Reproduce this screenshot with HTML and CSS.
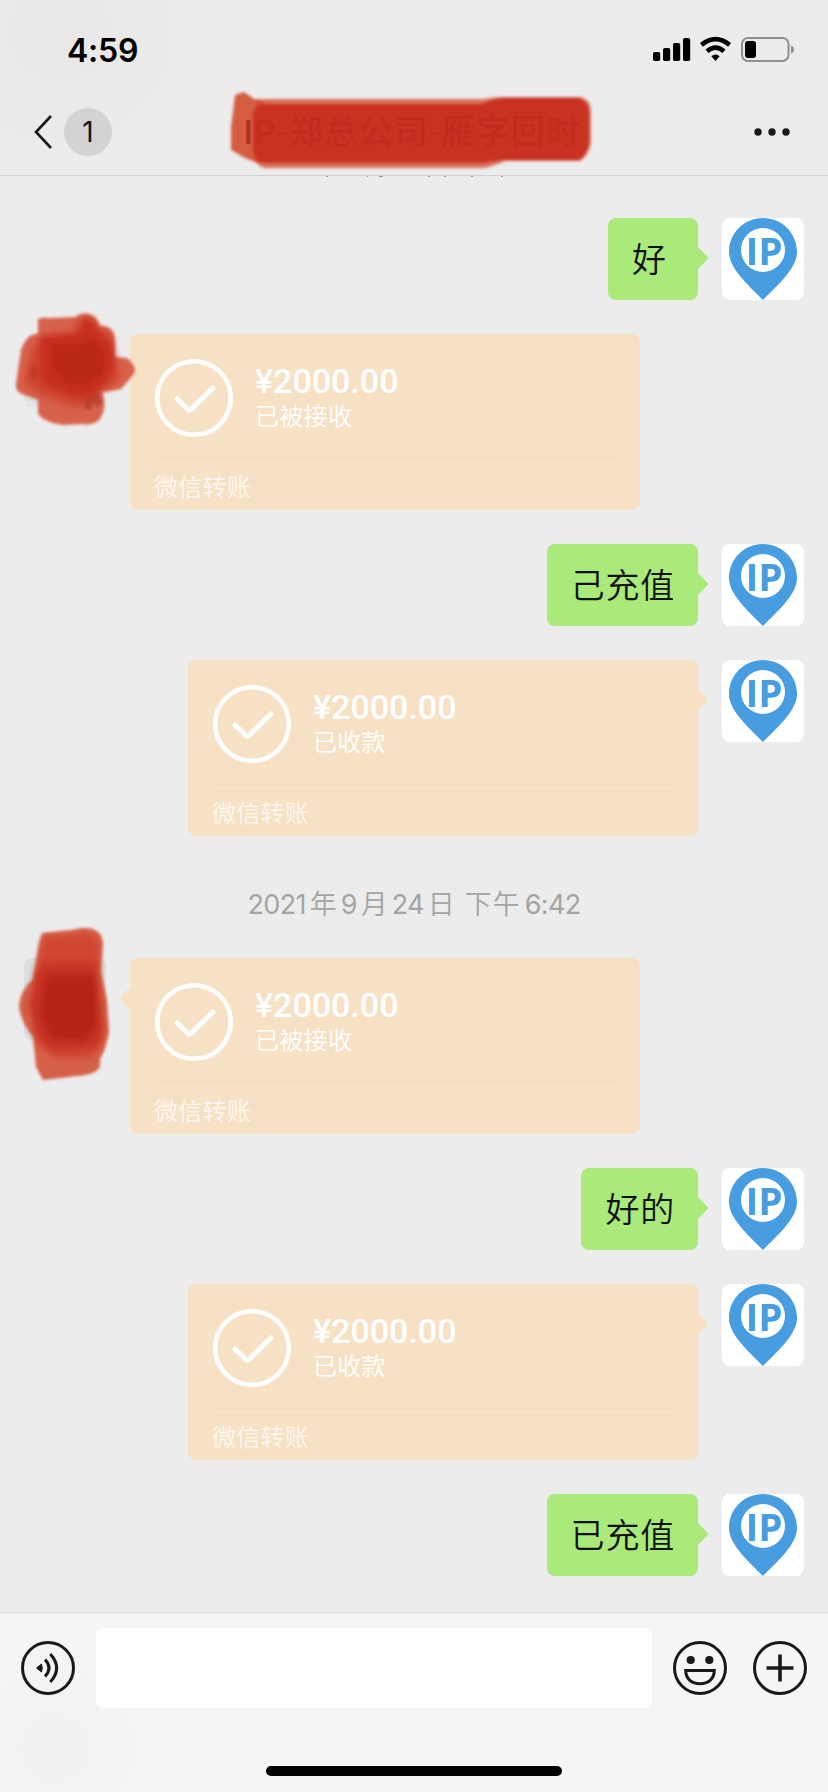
FILE: index.html
```html
<!DOCTYPE html>
<html lang="zh-CN">
<head>
<meta charset="utf-8">
<title>聊天</title>
<link rel="stylesheet" href="styles.css">
</head>
<body>
<svg class="defs" width="0" height="0">
  <defs>
    <filter id="soft" x="-10%" y="-10%" width="120%" height="120%"><feGaussianBlur stdDeviation="1.4"/></filter>
    <filter id="softer" x="-20%" y="-20%" width="140%" height="140%"><feGaussianBlur stdDeviation="3"/></filter>
    <symbol id="pin" viewBox="0 0 82 82">
      <path d="M41 0C22 0 7 15 7 34C7 50 25 66 41 82C57 66 75 50 75 34C75 15 60 0 41 0Z" fill="#489ce0"/>
      <circle cx="41" cy="32" r="22" fill="#fdfffd"/>
      <text x="23.500" y="46.5" class="pin-text" textLength="37" lengthAdjust="spacingAndGlyphs">IP</text>
    </symbol>
    <symbol id="check" viewBox="0 0 80 80">
      <circle cx="40" cy="40" r="36.8" fill="none" stroke="#fff" stroke-width="4.6"/>
      <path d="M21.500 39.500L34 51.500Q35.500 53 37 51.500L60.500 28.500" fill="none" stroke="#fff" stroke-width="4.8"/>
    </symbol>
  </defs>
</svg>
<div class="screen">
  <header class="header">
    <div class="status">
      <span class="clock">4:59</span>
      <svg class="status-icons" width="144" height="28" viewBox="0 0 144 28">
        <rect x="1" y="16" width="7.200" height="9" rx="1.800"/>
        <rect x="11" y="12" width="7.200" height="13" rx="1.800"/>
        <rect x="21" y="7" width="7.200" height="18" rx="1.800"/>
        <rect x="31" y="2" width="7.200" height="23" rx="1.800"/>
        <g fill="none" stroke="#000" stroke-width="4.600">
          <path d="M49.400 8.900Q63.500 -2.500 77.600 8.900"/>
          <path d="M55 15.200Q63.500 8 72 15.200"/>
        </g>
        <path d="M59.300 20.200Q63.500 16.800 67.700 20.200L63.500 25Z"/>
        <rect x="90" y="2" width="46.500" height="23" rx="6" fill="none" stroke="#8f8f8f" stroke-width="2"/>
        <rect x="93" y="5" width="11" height="17" rx="3"/>
        <path d="M139 9.500Q142 10.500 142 13.500T139 17.500Z" fill="#8f8f8f"/>
      </svg>
    </div>
    <div class="nav">
      <div class="back">
        <svg width="20" height="36" viewBox="0 0 20 36"><path d="M17 2L2 18L17 34" fill="none" stroke="#191919" stroke-width="2.600"/></svg>
        <span class="count">1</span>
      </div>
      <div class="title"><i>I</i>P-郑总公司-雁字回时</div>
      <svg class="more" width="36" height="8" viewBox="0 0 36 8"><circle cx="4" cy="4" r="3.700"/><circle cx="18" cy="4" r="3.700"/><circle cx="32" cy="4" r="3.700"/></svg>
    </div>
    <svg class="scribble title-mark" width="370" height="90" viewBox="0 0 370 90">
      <g filter="url(#soft)">
        <path d="M10 8L19 5L29 12L40 16V76L30 75L20 71L6 63L6 40Z" fill="#d04a2b" opacity=".88"/>
        <path d="M31 12H258Q270 10 278 10H356Q365 13 366 22V56Q364 69 355 74H280Q264 81 258 81H40Q32 79 29 72Z" fill="#d4452a" opacity=".75"/>
        <path d="M36 17H257Q270 11 280 11H354Q364 16 364 25V56Q361 68 354 73H278Q268 74 258 76H39Q30 76 28 64V24Z" fill="#c93120"/>
      </g>
    </svg>
  </header>

  <main class="chat">
    <svg class="clipped" width="200" height="2" viewBox="0 0 200 2" fill="#999"><path d="M16 0h2v1h-2zM57 0h1v1h-1zM69 0h4v1h-4zM118 0h2v1h-2zM134 0h2v1h-2zM161 0h2v1h-2zM191 0h2v1h-2z"/></svg>
    <div class="row me">
      <div class="bubble">好</div>
      <div class="avatar"><svg width="82" height="82"><use href="#pin"/></svg></div>
    </div>
    <div class="row peer">
      <div class="photo photo-a">
        <svg class="scribble" width="126" height="120" viewBox="0 0 126 120">
          <path d="M12 76Q12 60 26 58L70 62L92 78Q92 90 86 93H15Q11 86 12 76Z" fill="#dfe4e6"/>
          <g filter="url(#soft)">
            <path d="M26 5Q30 3 38 4L64 3Q68 -1 76 0Q84 1 88 12Q102 11 103 26L103 43L115 44Q123 50 123 58L117 66L109 75L99 77L90 78Q96 92 88 105Q82 112 70 110L50 111Q32 108 26 100V86L12 81Q3 78 4 70L9 36Q15 19 26 20Z" fill="#d34a30" opacity=".85"/>
            <path d="M72 84L80 80L86 78L90 88L86 94L81 88L79 96L73 95Z" fill="#93331f" opacity=".5"/>
            <path d="M17 58L23 47L27 61L21 66Z" fill="#97301f" opacity=".5"/>
          </g>
          <g filter="url(#softer)">
            <path d="M27 24L61 21L65 6Q74 -2 84 8L88 14Q101 17 101 30L103 45L109 63L96 74L88 78L80 90L64 94L26 80L12 68L20 34Z" fill="#cb301f" opacity=".6"/>
            <path d="M28 22L66 18L76 2L90 22L101 30L104 50L96 66L84 80L66 84L30 70Z" fill="#c52a1b" opacity=".9"/>
            <path d="M40 30H68L82 24L94 42L90 60L72 72L52 66L40 52Z" fill="#b32218" opacity=".6"/>
          </g>
        </svg>
      </div>
      <div class="card">
        <div class="pay"><svg width="80" height="80"><use href="#check"/></svg><div><div class="amount">¥2000.00</div><div class="state">已被接收</div></div></div>
        <div class="source">微信转账</div>
      </div>
    </div>
    <div class="row me">
      <div class="bubble">己充值</div>
      <div class="avatar"><svg width="82" height="82"><use href="#pin"/></svg></div>
    </div>
    <div class="row me">
      <div class="card">
        <div class="pay"><svg width="80" height="80"><use href="#check"/></svg><div><div class="amount">¥2000.00</div><div class="state">已收款</div></div></div>
        <div class="source">微信转账</div>
      </div>
      <div class="avatar"><svg width="82" height="82"><use href="#pin"/></svg></div>
    </div>
    <div class="date"><b>2021</b>年<b>9</b>月<b>24</b>日<span class="part">下午</span><b>6:42</b></div>
    <div class="row peer">
      <div class="photo photo-b">
        <svg class="scribble" width="100" height="160" viewBox="0 0 100 160">
          <g filter="url(#soft)">
            <path d="M31 4L61 1Q82 -5 90 6L92 14L90 42L96 72L98 104L93 122L89 130L89 138Q84 146 66 147L32 151L25 138L22 108Q9 92 8 76Q9 62 22 50L28 14Z" fill="#d34a2c" opacity=".86"/>
          </g>
          <g filter="url(#softer)">
            <path d="M33 8L80 4L88 14V50L93 100Q93 115 86 124L78 130L45 130L27 117L22 98L22 50Z" fill="#cb301e" opacity=".55"/>
            <path d="M26 44L34 35L86 34L92 100L86 118L46 122L26 110L18 76Z" fill="#c42a1b" opacity=".8"/>
            <path d="M34 50L44 46L84 46L86 96L74 112L40 110L30 86Z" fill="#af2117" opacity=".75"/>
          </g>
        </svg>
      </div>
      <div class="card tail">
        <div class="pay"><svg width="80" height="80"><use href="#check"/></svg><div><div class="amount">¥2000.00</div><div class="state">已被接收</div></div></div>
        <div class="source">微信转账</div>
      </div>
    </div>
    <div class="row me">
      <div class="bubble">好的</div>
      <div class="avatar"><svg width="82" height="82"><use href="#pin"/></svg></div>
    </div>
    <div class="row me">
      <div class="card">
        <div class="pay"><svg width="80" height="80"><use href="#check"/></svg><div><div class="amount">¥2000.00</div><div class="state">已收款</div></div></div>
        <div class="source">微信转账</div>
      </div>
      <div class="avatar"><svg width="82" height="82"><use href="#pin"/></svg></div>
    </div>
    <div class="row me">
      <div class="bubble">已充值</div>
      <div class="avatar"><svg width="82" height="82"><use href="#pin"/></svg></div>
    </div>
  </main>

  <footer class="footer">
    <div class="composer">
      <svg class="tool" width="56" height="56" viewBox="0 0 56 56">
        <circle cx="28" cy="28" r="25.500"/>
        <path d="M16.500 28L21.500 24Q23 28 21.500 32Z" fill="#191919" stroke-width="1"/>
        <path d="M25 19.500Q33 28 25 36.500M30.300 14Q43 28 30.300 42"/>
      </svg>
      <div class="field"></div>
      <svg class="tool smile" width="56" height="56" viewBox="0 0 56 56">
        <circle cx="28" cy="28" r="25.500"/>
        <circle cx="18.700" cy="20" r="4.100" class="solid"/><circle cx="37.300" cy="20" r="4.100" class="solid"/>
        <path d="M13.700 30.500H42.300C42.300 39 36 43.700 28 43.700S13.700 39 13.700 30.500Z"/>
      </svg>
      <svg class="tool" width="56" height="56" viewBox="0 0 56 56"><circle cx="28" cy="28" r="25.500"/><path d="M14.500 28H41.500M28 14.500V41.500" stroke-width="3.600"/></svg>
    </div>
    <div class="home"></div>
  </footer>
</div>
</body>
</html>
```
FILE: styles.css
```css
* { box-sizing: border-box; }
body { margin: 0; background: #ececec; font-family: Inter, "Noto Sans CJK SC", sans-serif; }
svg { display: block; flex: none; }
.defs { position: absolute; }
.screen { width: 828px; height: 1792px; display: flex; flex-direction: column; overflow: hidden; background: #ececec; }

.header { position: relative; height: 176px; flex: none; border-bottom: 1px solid #d0d0d0; background: radial-gradient(circle at 60px 30px, #e9e7e6 0, #ececec 130px); }
.status { height: 88px; display: flex; justify-content: space-between; padding: 36px 32px 0 67px; }
.clock { font-size: 32px; font-weight: 600; line-height: 29px; letter-spacing: -.2px; color: #000; }
.nav { height: 88px; display: flex; align-items: center; justify-content: space-between; padding: 0 38px 0 34px; }
.back { display: flex; align-items: center; gap: 10px; width: 110px; }
.count { width: 48px; height: 48px; border-radius: 50%; background: #d3d3d3; font-size: 28px; line-height: 49px; text-align: center; color: #191919; }
.title { position: relative; z-index: 2; font-family: Roboto, "Noto Sans CJK SC", sans-serif; font-size: 34px; line-height: 50px; letter-spacing: .9px; white-space: nowrap; font-weight: 500; color: #c02c1e; }
.title i { font-style: normal; color: #ae3320; }
.more { margin-left: 74px; fill: #191919; }
.scribble { position: absolute; overflow: visible; }
.title-mark { left: 225px; top: 87px; z-index: 1; }

.chat { flex: none; height: 1436px; display: flex; flex-direction: column; gap: 34px; padding-top: 42px; position: relative; }
.clipped { position: absolute; left: 310px; top: 0; }
.row { display: flex; align-items: flex-start; gap: 24px; padding: 0 24px; }
.me { justify-content: flex-end; }
.bubble, .card { position: relative; border-radius: 8px; }
.bubble { min-width: 90px; height: 82px; padding: 0 23px 0 24px; background: #a9ea7a; color: #111; font-family: "Noto Sans CJK SC", sans-serif; font-size: 34px; line-height: 80px; letter-spacing: .8px; font-weight: 350; }
.bubble::after, .me .card::after, .tail::after { content: ""; position: absolute; top: 28px; right: -10px; width: 11px; height: 24px; background: inherit; clip-path: polygon(0 0, 90% 42%, 100% 50%, 90% 58%, 0 100%); }
.tail::after { right: auto; left: -10px; transform: scaleX(-1); }
.avatar { width: 82px; height: 82px; border-radius: 8px; background: #fff; overflow: hidden; }
.pin-text { font-family: "Open Sans", sans-serif; font-size: 38px; font-weight: 700; fill: #489ce0; }
.photo { position: relative; width: 82px; height: 82px; border-radius: 8px; z-index: 1; }
.photo-a .scribble { left: -12px; top: -20px; }
.photo-b { background: #dadfe2; }
.photo-b .scribble { left: -13px; top: -29px; }

.card { width: 510px; height: 176px; padding: 24px; background: #f7e1c5; color: #fff; }
.pay { height: 105px; display: flex; align-items: flex-start; gap: 21px; border-bottom: 1px solid #f8e7d2; }
.amount { margin-top: 4px; height: 38px; line-height: 38px; font-family: Roboto, sans-serif; font-size: 34px; font-weight: 500; }
.state, .source { font-family: "Noto Sans CJK SC", sans-serif; font-size: 24px; letter-spacing: .3px; font-weight: 350; }
.state { line-height: 30px; }
.source { line-height: 46px; color: rgba(255, 255, 255, .8); }
.date { height: 54px; padding-top: 16px; color: #a4a4a4; font-size: 27px; line-height: 38px; white-space: nowrap; display: flex; justify-content: center; align-items: center; gap: 4px; font-weight: 350; }
.date b { font-size: 27px; font-weight: 400; letter-spacing: -.7px; }
.part { margin-left: 6px; letter-spacing: 1px; }

.footer { flex: none; height: 180px; border-top: 1px solid #d9d9d9; background: radial-gradient(circle at 55px 135px, #f1f0ef 0, #f5f5f5 105px); }
.composer { display: flex; align-items: center; height: 110px; padding: 0 20px; }
.field { width: 556px; height: 80px; margin: 0 20px; border-radius: 8px; background: #fff; }
.smile { margin-right: 24px; }
.tool { fill: none; stroke: #191919; stroke-width: 3; }
.tool .solid { fill: #191919; stroke: none; }
.home { width: 296px; height: 10px; margin: 43px auto 0; border-radius: 5px; background: #000; }
```
